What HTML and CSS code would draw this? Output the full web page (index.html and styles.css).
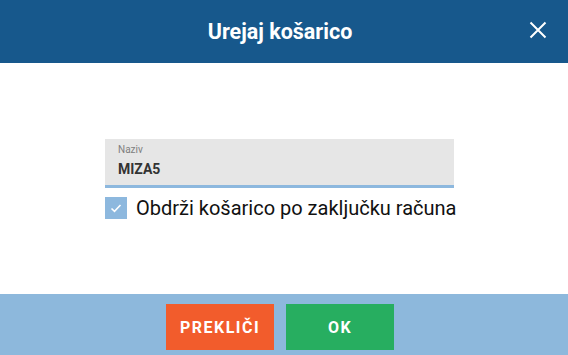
FILE: index.html
```html
<!DOCTYPE html>
<html lang="sl">
<head>
<meta charset="utf-8">
<link rel="stylesheet" href="styles.css">
</head>
<body>
<div class="dialog">
  <header class="head">
    <div class="head-inner">
      <span class="spacer"></span>
      <h1 class="title">Urejaj košarico</h1>
      <button class="close" aria-label="Zapri">
        <svg width="18" height="18" viewBox="0 0 18 18"><path d="M1.5 1.5 L16.5 16.5 M16.5 1.5 L1.5 16.5" stroke="#fff" stroke-width="2" fill="none"/></svg>
      </button>
    </div>
  </header>
  <main class="body">
    <div class="form">
      <div class="field">
        <label class="field-label">Naziv</label>
        <div class="field-value">MIZA5</div>
      </div>
      <label class="check">
        <span class="box">
          <svg width="14" height="14" viewBox="0 0 14 14"><path d="M2.5 7.5 L5.5 10.3 L11.5 4" stroke="#fff" stroke-width="1.6" fill="none"/></svg>
        </span>
        <span class="check-text">Obdrži košarico po zaključku računa</span>
      </label>
    </div>
  </main>
  <footer class="foot">
    <div class="foot-inner">
      <button class="btn btn-cancel">PREKLIČI</button>
      <button class="btn btn-ok">OK</button>
    </div>
  </footer>
</div>
</body>
</html>
```
FILE: styles.css
```css
* { box-sizing: border-box; }
html, body { margin: 0; padding: 0; }
body {
  font-family: Roboto, "Liberation Sans", Arial, sans-serif;
  background: #fff;
  width: 568px;
  height: 355px;
  overflow: hidden;
}
.dialog {
  display: flex;
  flex-direction: column;
  height: 355px;
}
.head {
  background: #17588c;
  height: 63px;
}
.head-inner {
  width: 560px;
  height: 63px;
  display: grid;
  grid-template-columns: 1fr auto 1fr;
  align-items: center;
}
.title {
  margin: 0;
  color: #fff;
  font-size: 21.5px;
  font-weight: 700;
  margin-top: -1px;
}
.close {
  justify-self: end;
  margin-right: 13px;
  margin-top: -4px;
  background: none;
  border: 0;
  padding: 0;
  width: 18px;
  height: 18px;
  display: flex;
}
.body {
  flex: 1;
  background: #fff;
}
.form {
  width: 349px;
  margin: 76px 0 0 105px;
}
.field {
  background: #e6e6e6;
  border-bottom: 3px solid #8db8de;
  height: 49px;
  padding: 5px 0 0 13px;
}
.field-label {
  display: block;
  font-size: 10px;
  color: #808080;
  line-height: 12px;
}
.field-value {
  font-size: 14px;
  font-weight: 700;
  color: #333;
  line-height: 16px;
  margin-top: 5px;
}
.check {
  display: flex;
  align-items: center;
  margin-top: 8px;
  gap: 9px;
}
.box {
  width: 22px;
  height: 22px;
  background: #8db8de;
  display: flex;
  align-items: center;
  justify-content: center;
  flex: none;
}
.check-text {
  font-size: 20px;
  color: #111;
  white-space: nowrap;
}
.foot {
  background: #8db8dc;
  height: 61px;
}
.foot-inner {
  width: 560px;
  display: flex;
  justify-content: center;
  gap: 12px;
  padding-top: 10px;
}
.btn {
  width: 108px;
  height: 46px;
  border: 0;
  color: #fff;
  font-family: Roboto, "Liberation Sans", Arial, sans-serif;
  font-size: 16px;
  font-weight: 700;
  letter-spacing: 1.5px;
  padding: 0;
}
.btn-cancel { background: #f25c2c; }
.btn-ok { background: #27ae60; }
```
